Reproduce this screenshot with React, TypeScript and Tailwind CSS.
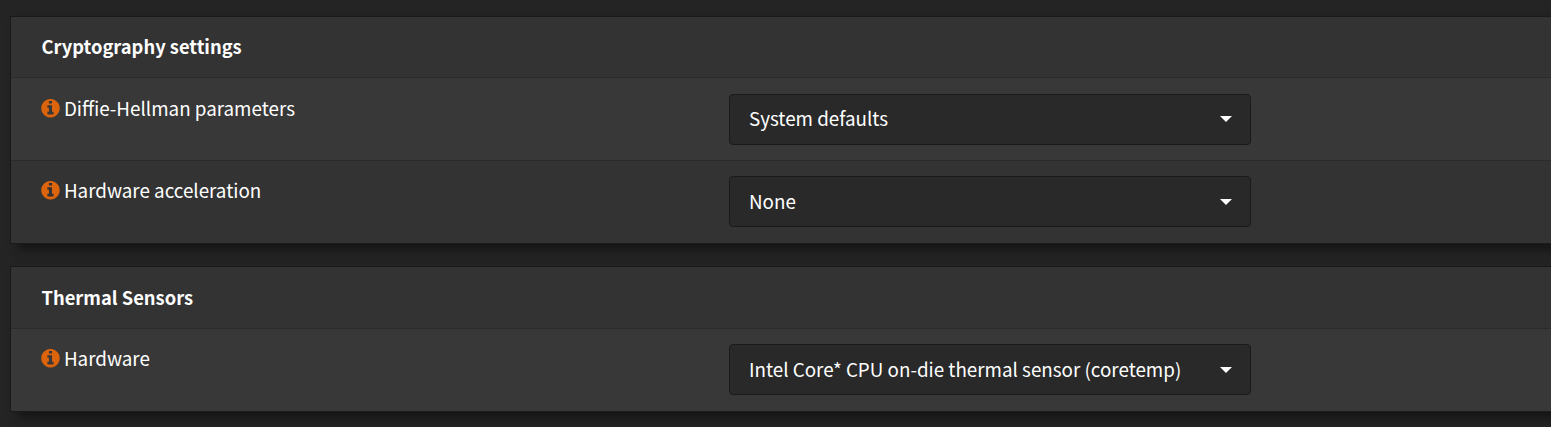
import React from "react";

function InfoIcon() {
  return (
    <svg viewBox="108 128 1580 1580" className="mr-[3.7px] h-[19px] w-[19px] shrink-0 fill-[#dc640c]">
      <path d="M1152 1376v-160q0-14-9-23t-23-9h-96v-512q0-14-9-23t-23-9h-320q-14 0-23 9t-9 23v160q0 14 9 23t23 9h96v320h-96q-14 0-23 9t-9 23v160q0 14 9 23t23 9h448q14 0 23-9t9-23zm-128-896v-160q0-14-9-23t-23-9h-192q-14 0-23 9t-9 23v160q0 14 9 23t23 9h192q14 0 23-9t9-23zm640 416q0 209-103 385.5t-279.5 279.5-385.5 103-385.5-103-279.5-279.5-103-385.5 103-385.5 279.5-279.5 385.5-103 385.5 103 279.5 279.5 103 385.5z" />
    </svg>
  );
}

type RowProps = { label: string; value: string; className: string; buttonClassName?: string };

function Row({ label, value, className, buttonClassName = "" }: RowProps) {
  return (
    <div className={`flex items-start border-t border-[#2b2b2b] pl-[30.2px] ${className}`}>
      <div className="flex h-[29px] w-[687.8px] items-center">
        <InfoIcon />
        <span className="-mt-px">{label}</span>
      </div>
      <button
        className={`flex h-[51px] w-[522px] items-center justify-between rounded-[4px] border border-[#1a1a1a] bg-[#292929] pr-[18px] pl-[19px] text-left ${buttonClassName}`}
      >
        <span className="-mt-[2px]">{value}</span>
        <svg viewBox="0 0 12 6" className="h-[6px] w-[12px] fill-white">
          <path d="M0 0h12L6 6z" />
        </svg>
      </button>
    </div>
  );
}

function Panel({ title, className, children }: { title: string; className: string; children: React.ReactNode }) {
  return (
    <section className="w-[1600px] border border-[#1a1a1a] bg-[#333333] shadow-[8px_6px_9px_0_#151515]">
      <h2 className={`flex items-center pb-[2px] pl-[30.5px] text-[18.33px] font-bold ${className}`}>{title}</h2>
      {children}
    </section>
  );
}

export default function App() {
  return (
    <main className="flex h-[427px] w-full flex-col items-start gap-[22px] overflow-hidden bg-[#242424] pt-[16px] pl-[10px] font-['Noto_Sans_CJK_SC',sans-serif] text-[18.81px] leading-[30px] text-white">
      <Panel title="Cryptography settings" className="h-[60px]">
        <Row
          label="Diffie-Hellman parameters"
          value="System defaults"
          className="h-[83px] bg-[#383838] pt-[16px]"
          buttonClassName="pb-[2px]"
        />
        <Row label="Hardware acceleration" value="None" className="h-[83px] bg-[#333333] pt-[15px]" />
      </Panel>
      <Panel title="Thermal Sensors" className="h-[61px]">
        <Row label="Hardware" value="Intel Core* CPU on-die thermal sensor (coretemp)" className="h-[83px] bg-[#383838] pt-[15px]" />
      </Panel>
    </main>
  );
}
